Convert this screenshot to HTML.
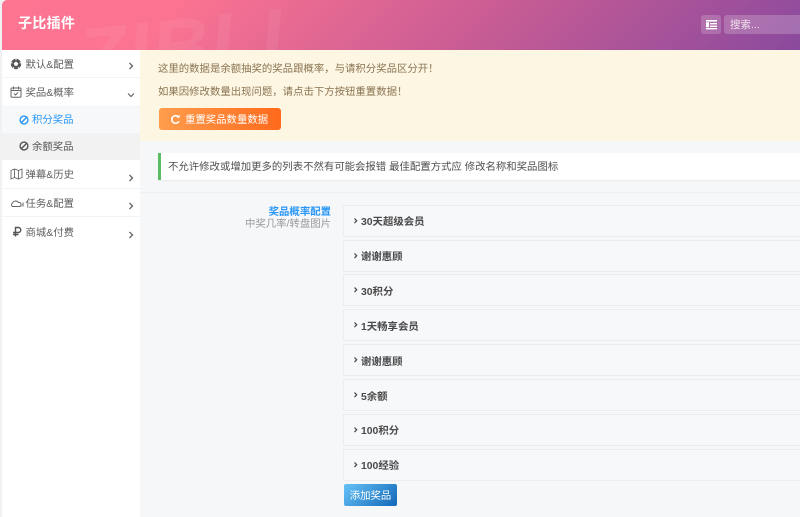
<!DOCTYPE html>
<html lang="zh">
<head>
<meta charset="utf-8">
<title>子比插件</title>
<style>
*{box-sizing:border-box}
html,body{margin:0;padding:0;width:800px;height:517px;overflow:hidden;background:#f6f7f9;font-family:"Liberation Sans","Noto Sans CJK SC",sans-serif}
#wrap{position:absolute;left:0;top:0;width:800px;height:517px;filter:blur(.3px)}
.abs{position:absolute}
#strip{position:absolute;left:0;top:0;width:3px;height:517px;background:#f0f1f3}
#header{position:absolute;left:2px;top:0;width:798px;height:50px;background:linear-gradient(135deg,#fd7591 0%,#fb7391 22%,#c85c94 60%,#8a4a9e 100%);border-top-left-radius:5px;overflow:hidden}
#header .wm{position:absolute;left:76px;top:13px;font:italic bold 80px/90px "Liberation Sans",sans-serif;color:rgba(255,255,255,.06);white-space:nowrap;transform:rotate(-6deg);transform-origin:0 50%;letter-spacing:1.500px}
#header h1{position:absolute;left:16px;top:12px;margin:0;font-size:14px;line-height:22px;font-weight:700;color:#fff;letter-spacing:.3px}
#menuBtn{position:absolute;left:699px;top:15px;width:20px;height:19px;background:rgba(255,255,255,.18);border-radius:3px}
#search{position:absolute;left:722px;top:15px;width:78px;height:19px;background:rgba(255,255,255,.2);border-radius:3px 0 0 3px;color:#f3e3ee;font-size:10.5px;line-height:20px;padding-left:6px}
#side{position:absolute;left:2px;top:50px;width:138px;height:467px;background:#fff}
.it{position:absolute;left:0;width:138px;font-size:10.4px;color:#5f5f5f;border-bottom:1px solid #f3f4f6}
.it span{position:absolute;left:23.500px;top:8px;line-height:15px;white-space:nowrap}
.it svg.ic{position:absolute;left:8px;top:8px}
.it svg.ar{position:absolute;left:126px;top:12px}
.sub{position:absolute;left:0;width:138px;font-size:10.4px}
.sub span{position:absolute;left:30px;top:6px;line-height:15px}
.sub svg{position:absolute;left:17px;top:8px}
#notice{position:absolute;left:140px;top:50px;width:660px;height:91px;background:#fdf6e3;color:#8a7452;font-size:10.4px}
#notice p{position:absolute;left:18px;margin:0;line-height:15px;white-space:nowrap}
#reset{position:absolute;left:19px;top:58px;width:122px;height:22px;border-radius:3px;background:linear-gradient(90deg,#ff9d4d,#ff6a1c);color:#fff;font-size:10.4px;line-height:25px;padding-left:26px;white-space:nowrap}
#tip{position:absolute;left:158px;top:153px;width:642px;height:27px;background:#fff;border-left:3px solid #5bbd63;font-size:10.4px;line-height:30px;color:#4f4f4f;padding-left:7px;white-space:nowrap;box-shadow:0 1px 1px rgba(0,0,0,.05)}
#hr{position:absolute;left:140px;top:192px;width:660px;height:1px;background:#eef0f2}
#lab1{position:absolute;left:200px;top:206px;width:131px;text-align:right;font-size:10.4px;line-height:14px;font-weight:700;color:#2997f7}
#lab2{position:absolute;left:200px;top:218px;width:131px;text-align:right;font-size:10.4px;line-height:14px;color:#999}
.acc{position:absolute;left:343px;width:457px;height:32px;background:#f7f8fa;border:1px solid #ecedf0;border-right:0;font-size:10.4px;font-weight:700;color:#4a4a4a}
.acc span{position:absolute;left:17px;top:9px;line-height:15px;white-space:nowrap}
.acc svg{position:absolute;left:9px;top:11px}
#add{position:absolute;left:344px;top:484px;width:53px;height:22px;border-radius:2px;background:linear-gradient(135deg,#67c2f7,#1167b8);color:#fff;font-size:10.4px;line-height:25px;text-align:center}
</style>
</head>
<body>
<div id="wrap">
<div id="strip"></div>
<div id="header">
  <div class="wm">ZIBLL</div>
  <h1>子比插件</h1>
  <div id="menuBtn"><svg width="20" height="19" viewBox="0 0 20 19"><path d="M5 5h11v1.600H5zM9 8h7v1.400H9zM9 10.600h7V12H9zM5 13h11v1.400H5zM5 7.200h3v5H5z" fill="#fff"/></svg></div>
  <div id="search">搜索...</div>
</div>
<div id="side">
  <div class="it" style="top:0;height:28px"><svg class="ic" width="12" height="12" viewBox="0 0 12 12"><circle cx="6" cy="6" r="5.200" fill="#555"/><path d="M6 3.600l2.200 1.600-.8 2.600H4.600l-.8-2.600z" fill="#fff"/><path d="M6 .8v1.500M1 4.600l1.400.6M11 4.600l-1.400.6M3 10.500l1-1.500M9 10.500L8 9" stroke="#fff" stroke-width="1"/></svg><span>默认&amp;配置</span><svg class="ar" width="6" height="8" viewBox="0 0 6 8"><path d="M1.500 1l3 3-3 3" fill="none" stroke="#666" stroke-width="1.300"/></svg></div>
  <div class="it" style="top:28px;height:29px"><svg class="ic" width="12" height="12" viewBox="0 0 12 12" style="top:8px"><rect x="1" y="2" width="10" height="9.300" rx="1" fill="none" stroke="#666"/><path d="M3.500 .5v3M8.500 .5v3M1 4.500h10" stroke="#666" fill="none"/><path d="M4 7.500l1.500 1.500L8 6.500" stroke="#666" fill="none"/></svg><span>奖品&amp;概率</span><svg class="ar" width="8" height="6" viewBox="0 0 8 6" style="left:125px;top:14px"><path d="M1 1.500l3 3 3-3" fill="none" stroke="#666" stroke-width="1.200"/></svg></div>
  <div class="sub" style="top:57px;height:26px;background:#f6f8fa;color:#2997f7"><svg width="10" height="10" viewBox="0 0 10 10" style="top:8px"><circle cx="5" cy="5" r="3.900" fill="none" stroke="#2997f7" stroke-width="1.400"/><path d="M2.300 7.700L7.700 2.300" stroke="#2997f7" stroke-width="1.400"/></svg><span style="top:6px">积分奖品</span></div>
  <div class="sub" style="top:83px;height:27px;background:#f2f2f2;color:#555"><svg width="10" height="10" viewBox="0 0 10 10" style="top:8px"><circle cx="5" cy="5" r="3.900" fill="none" stroke="#555" stroke-width="1.400"/><path d="M2.300 7.700L7.700 2.300" stroke="#555" stroke-width="1.400"/></svg><span style="top:7px">余额奖品</span></div>
  <div class="it" style="top:110px;height:29px"><svg class="ic" width="13" height="12" viewBox="0 0 13 12" style="left:8px;top:8px"><path d="M1 2.500l3.500-1.500 4 1.500L12 1v8.500L8.500 11l-4-1.500L1 11zM4.500 1v8.500M8.500 2.500V11" fill="none" stroke="#666" stroke-width=".9"/></svg><span>弹幕&amp;历史</span><svg class="ar" width="6" height="8" viewBox="0 0 6 8" style="top:14px"><path d="M1.500 1l3 3-3 3" fill="none" stroke="#666" stroke-width="1.300"/></svg></div>
  <div class="it" style="top:139px;height:28px"><svg class="ic" width="14" height="10" viewBox="0 0 14 10" style="left:8px;top:9px"><path d="M2.500 8.500A2 2 0 0 1 2.500 5 3.500 3.500 0 0 1 8.500 4.500 2 2 0 0 1 9.500 8.500z" fill="none" stroke="#666"/><path d="M11 5.500v3M13 4.500v4" stroke="#777" stroke-width="1.200"/></svg><span>任务&amp;配置</span><svg class="ar" width="6" height="8" viewBox="0 0 6 8" style="top:13px"><path d="M1.500 1l3 3-3 3" fill="none" stroke="#666" stroke-width="1.300"/></svg></div>
  <div class="it" style="top:167px;height:29px;border-bottom:0"><svg class="ic" width="10" height="12" viewBox="0 0 10 12" style="left:9.500px;top:8.500px"><path d="M3.500 10.500V1.500H6.300a2.500 2.500 0 0 1 0 5H1M1 8.500h5.500" fill="none" stroke="#555" stroke-width="1.400"/></svg><span style="top:9px">商城&amp;付费</span><svg class="ar" width="6" height="8" viewBox="0 0 6 8" style="top:14px"><path d="M1.500 1l3 3-3 3" fill="none" stroke="#666" stroke-width="1.300"/></svg></div>
</div>
<div id="notice">
  <p style="top:12px">这里的数据是余额抽奖的奖品跟概率，与请积分奖品区分开！</p>
  <p style="top:35px">如果因修改数量出现问题，请点击下方按钮重置数据！</p>
  <div id="reset"><svg class="abs" style="left:11px;top:6px" width="11" height="11" viewBox="0 0 11 11"><path d="M9 7.200A3.800 3.800 0 1 1 8.500 3" fill="none" stroke="#fff" stroke-width="1.600"/><path d="M6.500 3.800h3.200V.6z" fill="#fff"/></svg>重置奖品数量数据</div>
</div>
<div id="tip">不允许修改或增加更多的列表不然有可能会报错 最佳配置方式应 修改名称和奖品图标</div>
<div id="hr"></div>
<div id="lab1">奖品概率配置</div>
<div id="lab2">中奖几率/转盘图片</div>
<div class="acc" style="top:205px"><svg width="6" height="8" viewBox="0 0 6 8"><path d="M1.500 1.500l2.200 2.300-2.200 2.300" fill="none" stroke="#444" stroke-width="1.200"/></svg><span>30天超级会员</span></div>
<div class="acc" style="top:240px"><svg width="6" height="8" viewBox="0 0 6 8"><path d="M1.500 1.500l2.200 2.300-2.200 2.300" fill="none" stroke="#444" stroke-width="1.200"/></svg><span>谢谢惠顾</span></div>
<div class="acc" style="top:274px"><svg width="6" height="8" viewBox="0 0 6 8"><path d="M1.500 1.500l2.200 2.300-2.200 2.300" fill="none" stroke="#444" stroke-width="1.200"/></svg><span style="top:10px">30积分</span></div>
<div class="acc" style="top:309px"><svg width="6" height="8" viewBox="0 0 6 8"><path d="M1.500 1.500l2.200 2.300-2.200 2.300" fill="none" stroke="#444" stroke-width="1.200"/></svg><span style="top:10px">1天畅享会员</span></div>
<div class="acc" style="top:344px"><svg width="6" height="8" viewBox="0 0 6 8"><path d="M1.500 1.500l2.200 2.300-2.200 2.300" fill="none" stroke="#444" stroke-width="1.200"/></svg><span style="top:10px">谢谢惠顾</span></div>
<div class="acc" style="top:379px"><svg width="6" height="8" viewBox="0 0 6 8"><path d="M1.500 1.500l2.200 2.300-2.200 2.300" fill="none" stroke="#444" stroke-width="1.200"/></svg><span style="top:10px">5余额</span></div>
<div class="acc" style="top:414px"><svg width="6" height="8" viewBox="0 0 6 8"><path d="M1.500 1.500l2.200 2.300-2.200 2.300" fill="none" stroke="#444" stroke-width="1.200"/></svg><span>100积分</span></div>
<div class="acc" style="top:449px"><svg width="6" height="8" viewBox="0 0 6 8"><path d="M1.500 1.500l2.200 2.300-2.200 2.300" fill="none" stroke="#444" stroke-width="1.200"/></svg><span>100经验</span></div>
<div id="add">添加奖品</div>
</div>
</body>
</html>
